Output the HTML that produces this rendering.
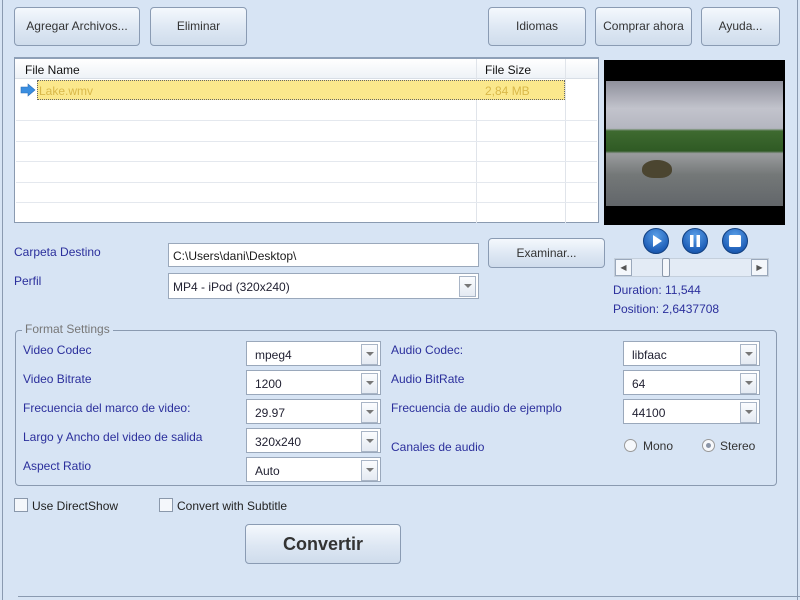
<!DOCTYPE html>
<html><head><meta charset="utf-8"><style>
*{box-sizing:border-box;margin:0;padding:0}
body{width:800px;height:600px;background:#d7e4f4;font-family:"Liberation Sans",sans-serif;font-size:12px;position:relative;overflow:hidden;color:#1a1a1a}
.a{position:absolute}
.btn{position:absolute;border:1px solid #8a9bb3;border-radius:4px;background:linear-gradient(#f4f8fd,#dde7f3 55%,#cfdcec);text-align:center;color:#333;font-size:12px}
.lbl{position:absolute;color:#2b2f9c;font-size:12px}
.sel{position:absolute;background:#fff;border:1px solid #9aa8bb;height:25px;font-size:12px;color:#223;padding:6px 0 0 8px}
.sel::after{content:"";position:absolute;right:2px;top:2px;width:15px;height:19px;border:1px solid #a9b5c6;background:linear-gradient(#fbfcfe,#e4eaf2)}
.sel i{position:absolute;right:6px;top:10px;border-left:4px solid transparent;border-right:4px solid transparent;border-top:4px solid #777;z-index:2}
.row{position:absolute;left:1px;right:1px;height:1px;background:#e4e8ee}
.pb{position:absolute;width:26px;height:26px;border-radius:50%;background:radial-gradient(circle at 50% 30%,#5aa0e8,#1f5fb8 70%,#164a94);border:1px solid #124080}
</style></head><body>
<div class="a" style="left:2px;top:0;width:1px;height:600px;background:#8a9ab0"></div>
<div class="a" style="left:797px;top:0;width:1px;height:600px;background:#8a9ab0"></div>
<div class="a" style="left:18px;top:596px;width:782px;height:1px;background:#8a9ab0"></div>

<div class="btn" style="left:14px;top:7px;width:126px;height:39px;line-height:37px">Agregar Archivos...</div>
<div class="btn" style="left:150px;top:7px;width:97px;height:39px;line-height:37px">Eliminar</div>
<div class="btn" style="left:488px;top:7px;width:98px;height:39px;line-height:37px">Idiomas</div>
<div class="btn" style="left:595px;top:7px;width:97px;height:39px;line-height:37px">Comprar ahora</div>
<div class="btn" style="left:701px;top:7px;width:79px;height:39px;line-height:37px">Ayuda...</div>

<div class="a" style="left:14px;top:57px;width:585px;height:166px;background:#fff;border:1px solid #8a9ab0;border-top:2px solid #8ea0b8">
 <div class="a" style="left:0;top:0;right:0;height:20px;background:linear-gradient(#fff,#eef2f7);border-bottom:1px solid #d8dee6"></div>
 <div class="a" style="left:10px;top:4px;color:#111">File Name</div>
 <div class="a" style="left:470px;top:4px;color:#111">File Size</div>
 <div class="a" style="left:461px;top:0;width:1px;height:164px;background:#e0e4ea"></div>
 <div class="a" style="left:550px;top:0;width:1px;height:164px;background:#e0e4ea"></div>
 <div class="a" style="left:22px;top:21px;width:528px;height:20px;background:#fbe88c;border:1px dotted #666"></div>
 <div class="a" style="left:24px;top:25px;color:#d9b84a">Lake.wmv</div>
 <div class="a" style="left:470px;top:25px;color:#d9b84a">2,84 MB</div>
 <svg class="a" style="left:5px;top:24px" width="16" height="14"><path d="M1 4h7V1l7 6-7 6V10H1z" fill="#3a8ee0" stroke="#2a6fb8" stroke-width=".6"/></svg>
 <div class="row" style="top:61px"></div><div class="row" style="top:82px"></div><div class="row" style="top:102px"></div><div class="row" style="top:123px"></div><div class="row" style="top:143px"></div>
</div>

<div class="a" style="left:604px;top:60px;width:181px;height:165px;background:#000">
 <div class="a" style="left:2px;top:21px;width:177px;height:125px;background:linear-gradient(#8f909c 0%,#c2c3cc 22%,#b4b6c0 38%,#3e6a30 40%,#2f5a24 56%,#9a9c9e 58%,#747878 75%,#62666a 100%)"></div>
 <div class="a" style="left:38px;top:100px;width:30px;height:18px;border-radius:50% 50% 40% 40%;background:#4b4530"></div>
</div>

<div class="pb" style="left:643px;top:228px"><svg width="24" height="24"><path d="M9 6l9 6-9 6z" fill="#fff"/></svg></div>
<div class="pb" style="left:682px;top:228px"><svg width="24" height="24"><rect x="7" y="6" width="3.5" height="12" fill="#fff"/><rect x="13.5" y="6" width="3.5" height="12" fill="#fff"/></svg></div>
<div class="pb" style="left:722px;top:228px"><svg width="24" height="24"><rect x="6" y="6" width="12" height="12" rx="1.5" fill="#fff"/></svg></div>

<div class="a" style="left:614px;top:258px;width:155px;height:19px;background:#e3ebf5;border:1px solid #c4cfdc"></div>
<div class="a" style="left:615px;top:259px;width:17px;height:17px;background:#f4f7fb;border:1px solid #9aa8bb;font-size:8px;color:#555;text-align:center;line-height:15px">◀</div>
<div class="a" style="left:751px;top:259px;width:17px;height:17px;background:#f4f7fb;border:1px solid #9aa8bb;font-size:8px;color:#555;text-align:center;line-height:15px">▶</div>
<div class="a" style="left:662px;top:258px;width:8px;height:19px;background:#f4f7fb;border:1px solid #8a98ab;border-radius:2px"></div>
<div class="lbl" style="left:613px;top:283px">Duration: 11,544</div>
<div class="lbl" style="left:613px;top:302px">Position: 2,6437708</div>

<div class="lbl" style="left:14px;top:245px">Carpeta Destino</div>
<div class="a" style="left:168px;top:243px;width:311px;height:24px;background:#fff;border:1px solid #9aa8bb;padding:5px 0 0 4px">C:\Users\dani\Desktop\</div>
<div class="btn" style="left:488px;top:238px;width:117px;height:30px;line-height:28px">Examinar...</div>
<div class="lbl" style="left:14px;top:274px">Perfil</div>
<div class="sel" style="left:168px;top:273px;width:311px;height:26px;padding:6px 0 0 4px">MP4 - iPod (320x240)<i></i></div>

<div class="a" style="left:15px;top:330px;width:762px;height:156px;border:1px solid #8a9ab0;border-radius:4px"></div>
<div class="a" style="left:22px;top:322px;padding:0 3px;background:#d7e4f4;color:#777">Format Settings</div>

<div class="lbl" style="left:23px;top:343px">Video Codec</div>
<div class="lbl" style="left:23px;top:372px">Video Bitrate</div>
<div class="lbl" style="left:23px;top:401px">Frecuencia del marco de video:</div>
<div class="lbl" style="left:23px;top:430px">Largo y Ancho del video de salida</div>
<div class="lbl" style="left:23px;top:459px">Aspect Ratio</div>
<div class="sel" style="left:246px;top:341px;width:135px">mpeg4<i></i></div>
<div class="sel" style="left:246px;top:370px;width:135px">1200<i></i></div>
<div class="sel" style="left:246px;top:399px;width:135px">29.97<i></i></div>
<div class="sel" style="left:246px;top:428px;width:135px">320x240<i></i></div>
<div class="sel" style="left:246px;top:457px;width:135px">Auto<i></i></div>

<div class="lbl" style="left:391px;top:343px">Audio Codec:</div>
<div class="lbl" style="left:391px;top:372px">Audio BitRate</div>
<div class="lbl" style="left:391px;top:401px">Frecuencia de audio de ejemplo</div>
<div class="lbl" style="left:391px;top:440px">Canales de audio</div>
<div class="sel" style="left:623px;top:341px;width:137px">libfaac<i></i></div>
<div class="sel" style="left:623px;top:370px;width:137px">64<i></i></div>
<div class="sel" style="left:623px;top:399px;width:137px">44100<i></i></div>
<div class="a" style="left:624px;top:439px;width:13px;height:13px;border-radius:50%;border:1px solid #999;background:#f6f8fb"></div>
<div class="a" style="left:643px;top:439px;color:#333">Mono</div>
<div class="a" style="left:702px;top:439px;width:13px;height:13px;border-radius:50%;border:1px solid #999;background:#f6f8fb"><div class="a" style="left:3px;top:3px;width:5px;height:5px;border-radius:50%;background:#8a95a8"></div></div>
<div class="a" style="left:720px;top:439px;color:#333">Stereo</div>

<div class="a" style="left:14px;top:498px;width:14px;height:14px;border:1px solid #8a98ab;background:#f4f7fb"></div>
<div class="a" style="left:32px;top:499px;color:#222">Use DirectShow</div>
<div class="a" style="left:159px;top:498px;width:14px;height:14px;border:1px solid #8a98ab;background:#f4f7fb"></div>
<div class="a" style="left:177px;top:499px;color:#222">Convert with Subtitle</div>

<div class="btn" style="left:245px;top:524px;width:156px;height:40px;line-height:38px;font-size:18px;font-weight:bold;color:#333">Convertir</div>
</body></html>
